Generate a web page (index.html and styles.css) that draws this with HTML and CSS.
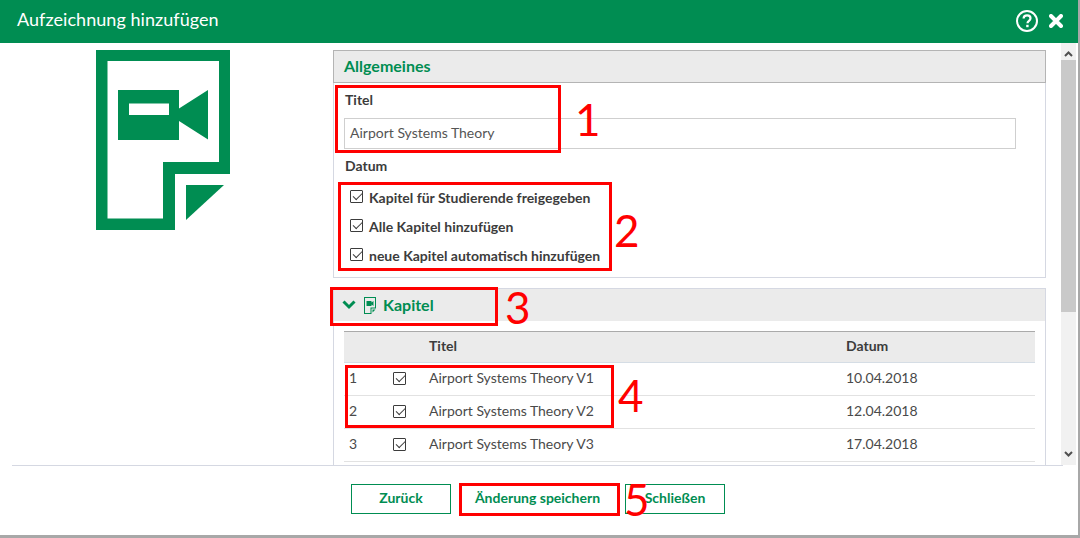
FILE: index.html
```html
<!DOCTYPE html>
<html lang="de">
<head>
  <meta charset="UTF-8" />
  <title>Aufzeichnung hinzufügen</title>
  <link rel="stylesheet" href="styles.css">
</head>
<body>
  <div class="dialog">
    <header class="dialog-head">
      <h1>Aufzeichnung hinzufügen</h1>
      <div class="head-icons">
        <svg width="24" height="24" viewBox="0 0 24 24">
          <circle cx="12" cy="12" r="10" fill="none" stroke="#fff" stroke-width="2"/>
          <path d="M8.600 9.600c0-2 1.500-3.200 3.500-3.200s3.400 1.100 3.400 2.900c0 2.600-3 2.500-3 5" fill="none" stroke="#fff" stroke-width="2.200"/>
          <rect x="11.200" y="15.800" width="2.400" height="2.400" fill="#fff"/>
        </svg>
        <svg width="14" height="14" viewBox="0 0 14 14">
          <path d="M2 2l10 10M12 2L2 12" stroke="#fff" stroke-width="4" stroke-linecap="round"/>
        </svg>
      </div>
    </header>

    <div class="dialog-body">
      <div class="side">
        <svg width="134" height="180" viewBox="96 50 134 180">
          <path fill="#008d52" fill-rule="evenodd" d="M96 50H230V174H175V230H96ZM107.500 61V218.500H163V162H219V61Z"/>
          <path fill="#008d52" d="M186 185H224L186 220Z"/>
          <path fill="#008d52" fill-rule="evenodd" d="M118 90H179V108.500L208 90V139.500L179 121V140H118ZM129 103.500V115H169V103.500Z"/>
        </svg>
      </div>

      <div class="content">
        <section class="panel panel-general">
          <h2 class="panel-title">Allgemeines</h2>
          <div class="panel-inner">
            <label class="field-label">Titel</label>
            <div class="text-input">Airport Systems Theory</div>
            <label class="field-label field-date">Datum</label>
            <div class="check-row"><span class="check"></span>Kapitel für Studierende freigegeben</div>
            <div class="check-row"><span class="check"></span>Alle Kapitel hinzufügen</div>
            <div class="check-row"><span class="check"></span>neue Kapitel automatisch hinzufügen</div>
          </div>
        </section>

        <section class="panel panel-chapters">
          <h2 class="panel-title chapters-title">
            <svg width="14" height="10" viewBox="0 0 14 10"><path d="M1.500 1.500L7 7l5.500-5.500" fill="none" stroke="#008d52" stroke-width="3"/></svg>
            <svg width="12" height="17" viewBox="0 0 12 17">
              <path fill="#008d52" fill-rule="evenodd" d="M0 0H12V11.500H7.500V17H0ZM1 1V16H6.500V10.500H11V1Z"/>
              <path fill="#008d52" d="M2.500 4H7.500V5.500L9.500 4V9L7.500 7.500V9H2.500ZM8.500 12.500H11.500L8.500 15.500Z"/>
            </svg>
            <span>Kapitel</span>
          </h2>
          <table class="chapters">
            <thead>
              <tr><th class="col-nr"></th><th class="col-check"></th><th class="col-title">Titel</th><th>Datum</th></tr>
            </thead>
            <tbody>
              <tr><td>1</td><td><span class="check"></span></td><td>Airport Systems Theory V1</td><td>10.04.2018</td></tr>
              <tr><td>2</td><td><span class="check"></span></td><td>Airport Systems Theory V2</td><td>12.04.2018</td></tr>
              <tr><td>3</td><td><span class="check"></span></td><td>Airport Systems Theory V3</td><td>17.04.2018</td></tr>
            </tbody>
          </table>
        </section>
      </div>

      <div class="scrollbar">
        <svg class="arrow" width="9" height="6" viewBox="0 0 9 6"><path d="M1 5l3.500-3.500L8 5" fill="none" stroke="#505050" stroke-width="2"/></svg>
        <div class="thumb"></div>
        <svg class="arrow arrow-down" width="9" height="6" viewBox="0 0 9 6"><path d="M1 1l3.500 3.500L8 1" fill="none" stroke="#505050" stroke-width="2"/></svg>
      </div>
    </div>

    <footer class="dialog-foot">
      <button type="button">Zurück</button>
      <button type="button" class="btn-save">Änderung speichern</button>
      <button type="button">Schließen</button>
    </footer>
  </div>

  <!-- Anmerkungen im Screenshot -->
  <div class="mark mark-1"></div><span class="mark-nr nr-1">1</span>
  <div class="mark mark-2"></div><span class="mark-nr nr-2">2</span>
  <div class="mark mark-3"></div><span class="mark-nr nr-3">3</span>
  <div class="mark mark-4"></div><span class="mark-nr nr-4">4</span>
  <div class="mark mark-5"></div><span class="mark-nr nr-5">5</span>
</body>
</html>
```

FILE: styles.css
```css
* {
  box-sizing: border-box;
}

html, body {
  margin: 0;
  padding: 0;
  height: 538px;
  overflow: hidden;
}

body {
  font-family: 'Lato', sans-serif;
  font-size: 14px;
  color: #3c3c3c;
  background: #fff;
  position: relative;
}

.dialog {
  height: 538px;
  display: flex;
  flex-direction: column;
  border-right: 2px solid #a8a8a8;
  border-bottom: 3px solid #a8a8a8;
}

.dialog-head {
  height: 43px;
  flex: none;
  background-color: #008d52;
  color: #fff;
  display: flex;
  align-items: center;
  justify-content: space-between;
  padding: 0 15px 2px 17px;
}

.dialog-head h1 {
  margin: 0 0 3px;
  font-size: 18px;
  font-weight: 400;
  letter-spacing: 0.05px;
}

.head-icons {
  display: flex;
  align-items: center;
  gap: 10px;
}

.dialog-body {
  height: 422px;
  flex: none;
  display: flex;
  overflow: hidden;
}

.side {
  width: 333px;
  flex: none;
  padding: 7px 0 0 96px;
}

.side svg {
  display: block;
}

.content {
  width: 713px;
  flex: none;
  padding-top: 7px;
}

.panel {
  border: 1px solid #d5d8e2;
}

.panel-title {
  margin: 0;
  height: 33px;
  background-color: #ebebeb;
  color: #008d52;
  font-size: 16px;
  font-weight: 700;
  line-height: 29px;
  padding-left: 10px;
}

.panel-general {
  height: 228px;
}

.panel-general .panel-title {
  margin: -1px -1px 0;
  border: 1px solid #b4b4b4;
}

.panel-inner {
  padding: 8px 10px 0;
}

.field-label {
  display: block;
  font-weight: 700;
  line-height: 17px;
  padding-left: 1px;
}

.text-input {
  width: 672px;
  height: 31px;
  margin-top: 10px;
  border: 1px solid #cfcfcf;
  padding-left: 5px;
  line-height: 27px;
  font-size: 14px;
  color: #555;
}

.field-date {
  margin-top: 8px;
  margin-bottom: 9px;
}

.check-row {
  display: flex;
  align-items: center;
  height: 29px;
  font-weight: 700;
  font-size: 14px;
  padding-left: 6px;
}

.check-row .check {
  margin-right: 6px;
  top: -1px;
}

.check {
  display: inline-block;
  width: 13px;
  height: 13px;
  border: 1px solid #3c3c3c;
  border-radius: 1px;
  position: relative;
  vertical-align: middle;
}

.check::after {
  content: "";
  position: absolute;
  left: 2.150px;
  top: 1.850px;
  width: 7.500px;
  height: 3.500px;
  border-left: 1px solid #3c3c3c;
  border-bottom: 1px solid #3c3c3c;
  transform: rotate(-45deg);
}

.panel-chapters {
  margin-top: 10px;
  height: 200px;
  border-bottom: 0;
}

.chapters-title {
  display: flex;
  align-items: center;
  height: 32px;
  padding-left: 8px;
  gap: 8px;
  margin: 0;
}

.chapters-title span {
  margin-left: -1px;
  position: relative;
  top: -1px;
}

.chapters {
  width: 691px;
  margin: 10px 0 0 10px;
  border-collapse: collapse;
  font-size: 14px;
}

.chapters th {
  height: 31px;
  background-color: #ebebeb;
  border-top: 1px solid #aaa;
  border-bottom: 1px solid #d5dde5;
  text-align: left;
  font-weight: 700;
  padding: 0 0 4px;
}

.chapters td {
  height: 33px;
  border-bottom: 1px solid #e2e2e2;
  padding: 0 0 4px;
  color: #4a4a4a;
}

.chapters td:first-child {
  padding-left: 5px;
}

.col-nr {
  width: 49px;
}

.col-check {
  width: 36px;
}

.col-title {
  width: 417px;
}

.scrollbar {
  width: 15px;
  flex: none;
  margin-left: 15px;
  background-color: #f1f1f1;
  display: flex;
  flex-direction: column;
  align-items: center;
  position: relative;
}

.arrow {
  margin-top: 5px;
  height: 12px;
}

.thumb {
  width: 15px;
  height: 252px;
  margin-top: 0;
  background-color: #c9c9c9;
}

.arrow-down {
  margin-top: auto;
  margin-bottom: 5px;
}

.dialog-foot {
  flex: 1;
  margin: 0 15px 0 12px;
  border-top: 1px solid #d5d8e2;
  display: flex;
  gap: 7px;
  padding: 18px 0 0 339px;
}

.dialog-foot button {
  width: 100px;
  height: 30px;
  background-color: #fff;
  border: 1px solid #008d52;
  color: #008d52;
  font-family: 'Lato', sans-serif;
  font-size: 14px;
  font-weight: 700;
  padding: 0 0 3px;
}

.dialog-foot .btn-save {
  width: 157px;
  margin-left: 3px;
  padding-right: 4px;
}

.mark {
  position: absolute;
  border: 3px solid #f00;
}

.mark-nr {
  position: absolute;
  color: #f00;
  font-family: 'Lato', sans-serif;
  font-size: 44px;
  line-height: 42px;
}

.mark-1 { left: 335px; top: 85px; width: 226px; height: 68px; }
.mark-2 { left: 338px; top: 182px; width: 274px; height: 89px; }
.mark-3 { left: 330px; top: 287px; width: 168px; height: 39px; }
.mark-4 { left: 345px; top: 365px; width: 269px; height: 63px; }
.mark-5 { left: 459px; top: 483px; width: 161px; height: 33px; }

.nr-1 { left: 575px; top: 98px; }
.nr-2 { left: 614px; top: 209px; }
.nr-3 { left: 505px; top: 286px; }
.nr-4 { left: 618px; top: 374px; }
.nr-5 { left: 624px; top: 478px; }
```
